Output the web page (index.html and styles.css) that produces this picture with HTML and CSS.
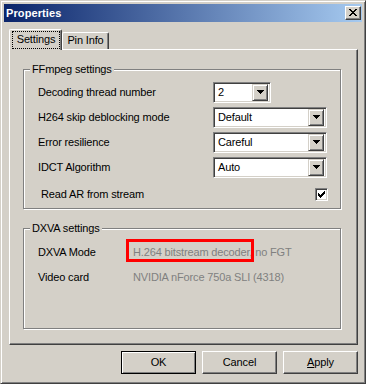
FILE: index.html
```html
<!DOCTYPE html>
<html>
<head>
<meta charset="utf-8">
<link rel="stylesheet" href="styles.css">
</head>
<body>
<div class="window">
  <div class="titlebar">
    <span class="title">Properties</span>
    <div class="close">
      <svg width="8" height="7" viewBox="0 0 8 7" shape-rendering="crispEdges"><path d="M0 0h2v1H0zM6 0h2v1H6zM1 1h2v1H1zM5 1h2v1H5zM2 2h4v1H2zM3 3h2v1H3zM2 4h4v1H2zM1 5h2v1H1zM5 5h2v1H5zM0 6h2v1H0zM6 6h2v1H6z" fill="#000"/></svg>
    </div>
  </div>
  <div class="body">
    <div class="tabs">
      <div class="tab active"><span class="focus">Settings</span></div>
      <div class="tab">Pin Info</div>
    </div>
    <div class="panel">
      <div class="group ffmpeg">
        <div class="group-title">FFmpeg settings</div>
        <div class="rows">
          <div class="label">Decoding thread number</div>
          <div class="combo small"><span class="val">2</span><span class="drop"><svg width="7" height="4" viewBox="0 0 7 4" shape-rendering="crispEdges"><path d="M0 0h7v1H0zM1 1h5v1H1zM2 2h3v1H2zM3 3h1v1H3z" fill="#000"/></svg></span></div>
          <div class="label">H264 skip deblocking mode</div>
          <div class="combo"><span class="val">Default</span><span class="drop"><svg width="7" height="4" viewBox="0 0 7 4" shape-rendering="crispEdges"><path d="M0 0h7v1H0zM1 1h5v1H1zM2 2h3v1H2zM3 3h1v1H3z" fill="#000"/></svg></span></div>
          <div class="label">Error resilience</div>
          <div class="combo"><span class="val">Careful</span><span class="drop"><svg width="7" height="4" viewBox="0 0 7 4" shape-rendering="crispEdges"><path d="M0 0h7v1H0zM1 1h5v1H1zM2 2h3v1H2zM3 3h1v1H3z" fill="#000"/></svg></span></div>
          <div class="label">IDCT Algorithm</div>
          <div class="combo"><span class="val">Auto</span><span class="drop"><svg width="7" height="4" viewBox="0 0 7 4" shape-rendering="crispEdges"><path d="M0 0h7v1H0zM1 1h5v1H1zM2 2h3v1H2zM3 3h1v1H3z" fill="#000"/></svg></span></div>
        </div>
        <div class="check-row">
          <span>Read AR from stream</span>
          <span class="checkbox"><svg width="7" height="7" viewBox="0 0 7 7" shape-rendering="crispEdges"><path d="M0 2h1v3H0zM1 3h1v3H1zM2 4h1v3H2zM3 3h1v3H3zM4 2h1v3H4zM5 1h1v3H5zM6 0h1v3H6z" fill="#000"/></svg></span>
        </div>
      </div>
      <div class="group dxva">
        <div class="group-title">DXVA settings</div>
        <div class="info">
          <div class="label">DXVA Mode</div>
          <div class="value">H.264 bitstream decoder, no FGT</div>
          <div class="label">Video card</div>
          <div class="value">NVIDIA nForce 750a SLI (4318)</div>
        </div>
        <div class="highlight"></div>
      </div>
    </div>
    <div class="buttons">
      <div class="btn default">OK</div>
      <div class="btn">Cancel</div>
      <div class="btn"><u>A</u>pply</div>
    </div>
  </div>
</div>
</body>
</html>
```
FILE: styles.css
```css
* { box-sizing: border-box; }
html, body { margin: 0; padding: 0; }
body {
  width: 366px;
  height: 384px;
  font-family: "Liberation Sans", Arial, sans-serif;
  font-size: 11px;
  color: #000;
  background: #d4d0c8;
}
.window {
  width: 366px;
  height: 384px;
  background: #d4d0c8;
  border: 1px solid;
  border-color: #d4d0c8 #404040 #404040 #d4d0c8;
  box-shadow: inset 1px 1px #fff, inset -1px -1px #808080;
  padding: 3px;
  display: flex;
  flex-direction: column;
}
.titlebar {
  height: 18px;
  flex: none;
  display: flex;
  align-items: center;
  background: linear-gradient(to right, #0a246a, #a6caf0);
  padding-left: 2px;
}
.title {
  color: #fff;
  font-weight: bold;
  font-size: 11px;
  line-height: 13px;
  letter-spacing: 0.1px;
}
.close {
  margin-left: auto;
  margin-right: 1px;
  width: 16px;
  height: 14px;
  background: #d4d0c8;
  border: 1px solid;
  border-color: #fff #404040 #404040 #fff;
  box-shadow: inset -1px -1px #808080;
  display: flex;
  align-items: center;
  justify-content: center;
  padding: 0 1px 1px 0;
}
.close svg { display: block; }
.body {
  flex: 1;
  display: flex;
  flex-direction: column;
  padding: 0 4px 0 5px;
  letter-spacing: -0.15px;
}
.tabs {
  margin-top: 7px;
  height: 20px;
  display: flex;
  align-items: flex-end;
  flex: none;
}
.tab {
  height: 17px;
  width: 47px;
  background: #d4d0c8;
  border-top: 1px solid #fff;
  border-left: 1px solid #fff;
  border-right: 1px solid #404040;
  box-shadow: inset -1px 0 #808080;
  border-radius: 2px 2px 0 0;
  display: flex;
  align-items: center;
  justify-content: center;
  line-height: 13px;
  padding-bottom: 1px;
}
.tab.active {
  width: 53px;
  height: 21px;
  margin-bottom: -1px;
  position: relative;
  z-index: 1;
  padding: 1px 1px 1px 2px;
  align-items: stretch;
}
.focus {
  flex: 1;
  border: 1px dotted #000;
  display: flex;
  align-items: center;
  justify-content: center;
  padding-bottom: 1px;
}
.panel {
  width: 349px;
  height: 296px;
  flex: none;
  border: 1px solid;
  border-color: #fff #404040 #404040 #fff;
  box-shadow: inset -1px -1px #808080;
  padding: 19px 0 0 13px;
}
.group {
  width: 318px;
  border: 1px solid #808080;
  box-shadow: inset 1px 1px #fff, 1px 1px #fff;
  position: relative;
}
.group-title {
  width: fit-content;
  margin: -7px 0 0 6px;
  padding: 0 2px;
  background: #d4d0c8;
  line-height: 13px;
}
.ffmpeg { height: 140px; }
.dxva { height: 101px; margin-top: 19px; }
.rows {
  margin-top: 6px;
  padding-left: 14px;
  display: grid;
  grid-template-columns: 175px auto;
  grid-auto-rows: 21px;
  row-gap: 4px;
  align-items: center;
}
.label { line-height: 13px; }
.combo {
  width: 114px;
  height: 21px;
  background: #fff;
  border: 1px solid;
  border-color: #808080 #fff #fff #808080;
  box-shadow: inset 1px 1px #404040, inset -1px -1px #d4d0c8;
  padding: 2px;
  display: flex;
  align-items: center;
}
.combo.small { width: 58px; }
.val {
  flex: 1;
  padding-left: 2px;
  line-height: 13px;
}
.drop {
  width: 16px;
  height: 17px;
  background: #d4d0c8;
  border: 1px solid;
  border-color: #d4d0c8 #404040 #404040 #d4d0c8;
  box-shadow: inset 1px 1px #fff, inset -1px -1px #808080;
  display: flex;
  align-items: center;
  justify-content: center;
  padding-bottom: 1px;
}
.drop svg { display: block; }
.check-row {
  margin: 10px 0 0 17px;
  width: 287px;
  height: 13px;
  display: flex;
  justify-content: space-between;
  align-items: center;
  line-height: 13px;
}
.checkbox {
  width: 13px;
  height: 13px;
  background: #fff;
  border: 1px solid;
  border-color: #808080 #fff #fff #808080;
  box-shadow: inset 1px 1px #404040, inset -1px -1px #d4d0c8;
  display: flex;
  align-items: center;
  justify-content: center;
}
.checkbox svg { display: block; }
.info {
  margin-top: 11px;
  padding-left: 14px;
  display: grid;
  grid-template-columns: 95px auto;
  grid-auto-rows: 13px;
  row-gap: 12px;
  line-height: 13px;
}
.value { color: #808080; }
.highlight {
  position: absolute;
  left: 102px;
  top: 10px;
  width: 128px;
  height: 23px;
  border: 3px solid #ff0000;
}
.buttons {
  margin-top: 6px;
  display: flex;
  justify-content: flex-end;
  gap: 6px;
}
.btn {
  width: 75px;
  height: 23px;
  border: 1px solid;
  border-color: #fff #404040 #404040 #fff;
  box-shadow: inset -1px -1px #808080;
  display: flex;
  align-items: center;
  justify-content: center;
  line-height: 13px;
}
.btn.default {
  border-color: #000;
  box-shadow: inset 1px 1px #fff, inset -1px -1px #808080;
}
```
